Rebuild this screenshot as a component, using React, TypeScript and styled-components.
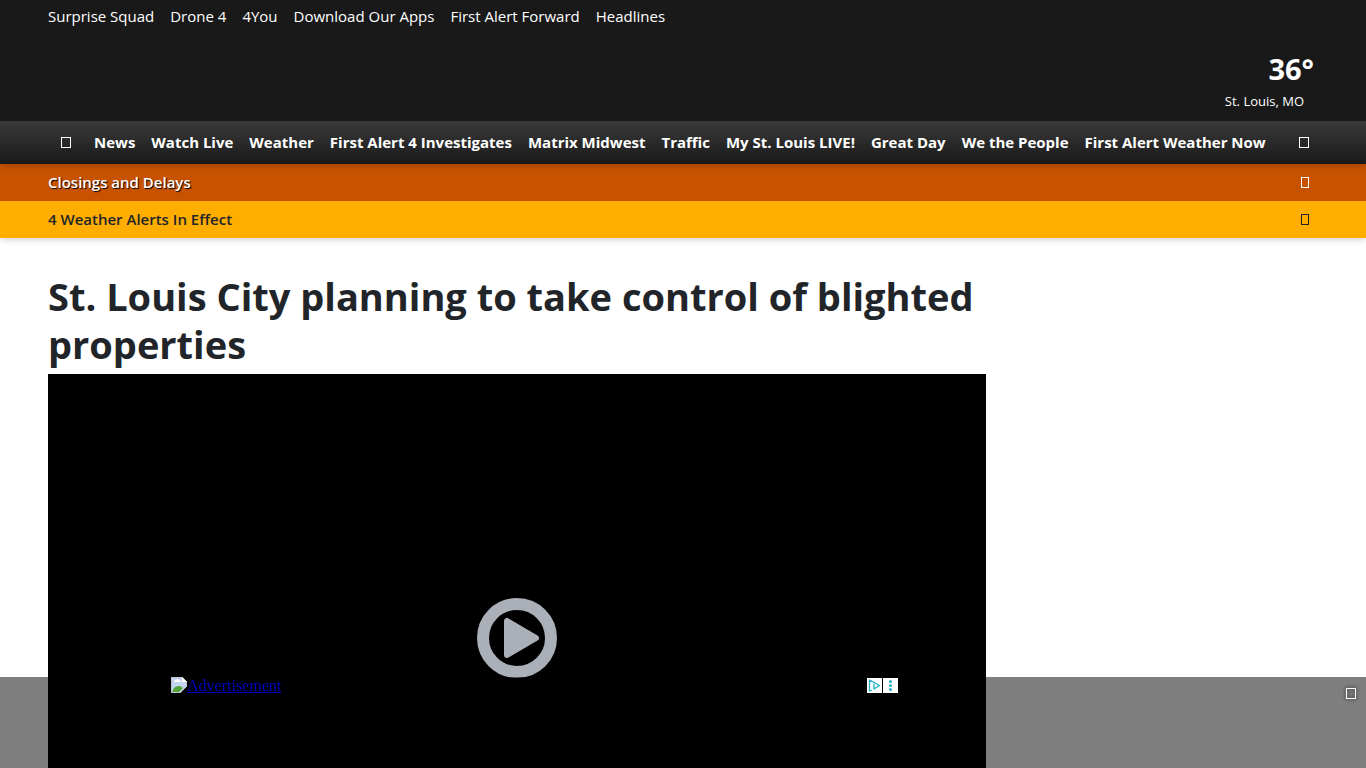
import React from 'react';
import styled, { createGlobalStyle } from 'styled-components';

const GlobalStyle = createGlobalStyle`
  *, *::before, *::after { box-sizing: border-box; }
  html { scrollbar-width: none; }
  body {
    margin: 0;
    background: #fff;
    color: #212529;
    font-family: 'Segoe UI', 'Open Sans', 'Noto Sans', sans-serif;
    font-size: 15px;
    line-height: 24px;
  }
  a { color: inherit; text-decoration: none; }
  button { font: inherit; color: inherit; background: none; border: 0; padding: 0; cursor: pointer; }
`;

const Masthead = styled.header`
  display: flex;
  flex-direction: column;
  justify-content: space-between;
  height: 121px;
  padding: 4px 48px 8px;
  background: #191919;
  color: #fff;
`;

const QuickLinks = styled.nav`
  display: flex;
  gap: 16px;
  white-space: nowrap;
`;

const Conditions = styled.a`
  display: flex;
  flex-direction: column;
  align-self: flex-end;
  align-items: flex-end;
`;

const Temperature = styled.strong`
  margin-right: 4px;
  font-size: 29px;
  line-height: 40px;
`;

const Place = styled.span`
  margin-right: 14px;
  font-size: 13px;
  line-height: 24px;
`;

const MainNav = styled.nav`
  position: relative;
  display: flex;
  align-items: center;
  height: 43px;
  padding: 0 57px 0 61px;
  background: linear-gradient(#3a3a3a, #191919);
  box-shadow: 0 2px 6px rgba(0, 0, 0, 0.2);
  color: #fff;
`;

const NavLinks = styled.div`
  display: flex;
  flex: 1;
  gap: 16px;
  padding: 0 0 2px 23px;
  font-weight: 700;
  white-space: nowrap;
`;

const AlertBar = styled.a<{ $tone: 'closings' | 'weather' }>`
  display: flex;
  align-items: center;
  justify-content: space-between;
  height: 37px;
  padding: 0 57px 0 48px;
  font-weight: 600;
  background: ${p => (p.$tone === 'closings' ? '#c75300' : '#ffae00')};
  color: ${p => (p.$tone === 'closings' ? '#fff' : '#212529')};
  text-shadow: ${p => (p.$tone === 'closings' ? '1px 1px 1px #000' : 'none')};
`;

const AlertText = styled.span`
  padding-bottom: 2px;
`;

const Alerts = styled.section`
  box-shadow: 0 2px 6px rgba(0, 0, 0, 0.16);
`;

const IconButton = styled.button`
  display: flex;
`;

const Glyph = styled.span<{ $wide?: boolean }>`
  display: block;
  width: ${p => (p.$wide ? 10 : 8)}px;
  height: 11px;
  border: 1px solid currentColor;
`;

const Page = styled.main`
  display: grid;
  grid-template-columns: minmax(0, 1fr) 300px;
  gap: 32px;
  padding: 34px 48px 0;
`;

const Headline = styled.h1`
  margin: 0 0 6px;
  font-size: 38px;
  line-height: 48px;
  font-weight: 700;
`;

const Player = styled.div`
  display: flex;
  align-items: center;
  justify-content: center;
  aspect-ratio: 16 / 9;
  background: #000;
`;

const AdDock = styled.aside`
  position: fixed;
  right: 0;
  bottom: 0;
  left: 0;
  display: flex;
  align-items: flex-start;
  justify-content: space-between;
  height: 91px;
  padding: 0 10px 0 171px;
  background: rgba(0, 0, 0, 0.5);
  color: #fff;
`;

const AdFrame = styled.div`
  display: flex;
  justify-content: space-between;
  width: 727px;
`;

const AdLink = styled.a`
  display: flex;
  color: #0000c4;
  font-family: 'Liberation Serif', serif;
  font-size: 16px;
  line-height: 18px;
  text-decoration: underline;
`;

const AdControls = styled.div`
  display: flex;
  gap: 1px;
  padding-top: 1px;
`;

const AdControl = styled.button`
  display: flex;
  width: 15px;
  height: 15px;
  background: #fff;
`;

const CloseButton = styled(IconButton)`
  padding-top: 11px;
  filter: drop-shadow(0 0 2px #000);
`;

const quickLinks = ['Surprise Squad', 'Drone 4', '4You', 'Download Our Apps', 'First Alert Forward', 'Headlines'];
const sections = [
  'News', 'Watch Live', 'Weather', 'First Alert 4 Investigates', 'Matrix Midwest', 'Traffic',
  'My St. Louis LIVE!', 'Great Day', 'We the People', 'First Alert Weather Now',
];

export default function App() {
  return (
    <>
      <GlobalStyle />
      <Masthead>
        <QuickLinks aria-label="Quick links">
          {quickLinks.map(label => <a href="#" key={label}>{label}</a>)}
        </QuickLinks>
        <Conditions href="#">
          <Temperature>36°</Temperature>
          <Place>St. Louis, MO</Place>
        </Conditions>
      </Masthead>
      <MainNav aria-label="Sections">
        <IconButton aria-label="Menu"><Glyph $wide /></IconButton>
        <NavLinks>
          {sections.map(label => <a href="#" key={label}>{label}</a>)}
        </NavLinks>
        <IconButton aria-label="Search"><Glyph $wide /></IconButton>
      </MainNav>
      <Alerts>
        <AlertBar href="#" $tone="closings"><AlertText>Closings and Delays</AlertText><Glyph /></AlertBar>
        <AlertBar href="#" $tone="weather"><AlertText>4 Weather Alerts In Effect</AlertText><Glyph /></AlertBar>
      </Alerts>
      <Page>
        <article>
          <Headline>St. Louis City planning to take control of blighted properties</Headline>
          <Player>
            <IconButton aria-label="Play video">
              <svg width="80" height="80" viewBox="0 0 80 80">
                <circle cx="40" cy="40" r="34" fill="none" stroke="#abb0b8" strokeWidth="12" />
                <path d="M30 23v34l29-17z" fill="#abb0b8" stroke="#abb0b8" strokeWidth="6" strokeLinejoin="round" />
              </svg>
            </IconButton>
          </Player>
        </article>
      </Page>
      <AdDock>
        <AdFrame>
          <AdLink href="#">
            <svg width="16" height="16" viewBox="0 0 16 16" aria-hidden="true">
              <path d="M0 0h11l5 5v4L9 16H0z" fill="#c3d5ef" />
              <path d="M0 0h11l5 5v4L9 16H0z" fill="none" stroke="#b5b5b5" />
              <path d="M3 5q0-2 2-2 2-2 3 0 2 0 2 2z" fill="#fff" />
              <path d="M1 15q2-7 8-6l3 2-4 4z" fill="#55a43a" />
              <path d="M11 0v5h5z" fill="#fff" />
            </svg>
            Advertisement
          </AdLink>
          <AdControls>
            <AdControl aria-label="AdChoices">
              <svg width="15" height="15" viewBox="0 0 15 15" fill="none" stroke="#20adc5">
                <path d="M5 12 2.5 13V2L12.5 7.5 7 11V6" strokeWidth="1.3" strokeLinejoin="round" />
                <circle cx="7" cy="4.6" r=".5" />
              </svg>
            </AdControl>
            <AdControl aria-label="Ad options">
              <svg width="15" height="15" viewBox="0 0 15 15" fill="#20adc5">
                <circle cx="7.5" cy="3.5" r="1.5" />
                <circle cx="7.5" cy="7.5" r="1.5" />
                <circle cx="7.5" cy="11.5" r="1.5" />
              </svg>
            </AdControl>
          </AdControls>
        </AdFrame>
        <CloseButton aria-label="Close advertisement"><Glyph $wide /></CloseButton>
      </AdDock>
    </>
  );
}
